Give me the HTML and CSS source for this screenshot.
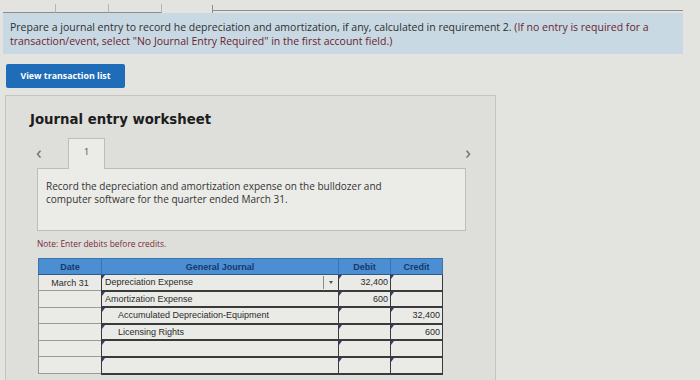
FILE: index.html
```html
<!DOCTYPE html>
<html lang="en">
<head>
    <meta charset="UTF-8">
    <meta name="viewport" content="width=device-width, initial-scale=1.0">
    <title>Journal entry worksheet</title>
    <link rel="stylesheet" href="styles.css">
</head>
<body>
    <div class="req-tabs">
        <span class="req-tab"></span>
        <span class="req-tab short"></span>
        <span class="req-tab"></span>
        <span class="req-tab active"></span>
        <span class="req-tab rest"></span>
    </div>

    <div class="instructions">
        <p>Prepare a journal entry to record he depreciation and amortization, if any, calculated in requirement 2. <span class="hint">(If no entry is required for a transaction/event, select "No Journal Entry Required" in the first account field.)</span></p>
    </div>

    <button class="view-btn">View transaction list</button>

    <div class="worksheet">
        <h2>Journal entry worksheet</h2>

        <div class="pager">
            <span class="arrow">&lsaquo;</span>
            <div class="page-tab">1</div>
            <span class="arrow next">&rsaquo;</span>
        </div>

        <div class="prompt">
            Record the depreciation and amortization expense on the bulldozer and<br>
            computer software for the quarter ended March 31.
        </div>

        <p class="note">Note: Enter debits before credits.</p>

        <table class="journal">
            <thead>
                <tr>
                    <th class="col-date">Date</th>
                    <th class="col-acct">General Journal</th>
                    <th class="col-amt">Debit</th>
                    <th class="col-amt">Credit</th>
                </tr>
            </thead>
            <tbody>
                <tr>
                    <td class="date">March 31</td>
                    <td class="acct mark"><div class="acct-select"><span>Depreciation Expense</span><span class="caret"></span></div></td>
                    <td class="amt mark">32,400</td>
                    <td class="amt mark"></td>
                </tr>
                <tr>
                    <td class="date"></td>
                    <td class="acct mark">Amortization Expense</td>
                    <td class="amt mark">600</td>
                    <td class="amt mark"></td>
                </tr>
                <tr>
                    <td class="date"></td>
                    <td class="acct mark indent">Accumulated Depreciation-Equipment</td>
                    <td class="amt mark"></td>
                    <td class="amt mark">32,400</td>
                </tr>
                <tr>
                    <td class="date"></td>
                    <td class="acct mark indent">Licensing Rights</td>
                    <td class="amt mark"></td>
                    <td class="amt mark">600</td>
                </tr>
                <tr>
                    <td class="date"></td>
                    <td class="acct mark"></td>
                    <td class="amt mark"></td>
                    <td class="amt mark"></td>
                </tr>
                <tr>
                    <td class="date"></td>
                    <td class="acct mark"></td>
                    <td class="amt mark"></td>
                    <td class="amt mark"></td>
                </tr>
            </tbody>
        </table>
    </div>
</body>
</html>
```

FILE: styles.css
```css
body {
    margin: 0;
    width: 700px;
    height: 380px;
    overflow: hidden;
    background-color: #e3e3df;
    font-family: "Open Sans", "DejaVu Sans", sans-serif;
    color: #2b2b2b;
}
.req-tabs {
    display: flex;
    align-items: flex-end;
    height: 13px;
    margin-left: 3px;
    width: 680px;
}
.req-tab {
    height: 8px;
    width: 52px;
    border-right: 1px solid #b5b5b1;
    border-bottom: 1px solid #8d8d8a;
}
.req-tab.active {
    width: 50px;
    border-bottom: none;
    border-right: 1px solid #8d8d8a;
}
.req-tab.rest {
    flex: 1;
    height: 10px;
    border-right: none;
    border-bottom: 1px solid #8d8d8a;
    margin-bottom: 2px;
}
.instructions {
    background-color: #c8d9e3;
    margin-left: 3px;
    width: 666px;
    padding: 7px 7px 6px;
}
.instructions p {
    margin: 0;
    font-size: 10.5px;
    line-height: 14px;
    color: #2f2f2f;
}
.instructions .hint {
    color: #6b2330;
}
.view-btn {
    display: block;
    margin: 10px 0 0 6px;
    width: 119px;
    height: 24px;
    border: none;
    border-radius: 2px;
    background-color: #1f6db9;
    color: white;
    font-family: "Open Sans", "DejaVu Sans", sans-serif;
    font-weight: bold;
    font-size: 8.8px;
    padding: 0;
}
.worksheet {
    margin: 7px 0 0 5px;
    width: 458px;
    height: 300px;
    padding: 0 0 0 31px;
    background-color: #dededb;
    border: 1px solid #c4c4c0;
}
.worksheet h2 {
    margin: 15px 0 0 -7px;
    font-family: "DejaVu Sans", sans-serif;
    font-size: 13.3px;
    font-weight: bold;
    color: #1d1d1d;
    line-height: 18px;
}
.pager {
    display: flex;
    align-items: flex-end;
    height: 31px;
    margin-top: 8px;
    width: 430px;
}
.arrow {
    width: 31px;
    align-self: center;
    font-size: 19px;
    line-height: 17px;
    color: #6e6e6c;
    margin-left: -1px;
}
.arrow.next {
    margin-left: auto;
    width: auto;
    margin-right: -4px;
}
.page-tab {
    width: 35px;
    height: 30px;
    background-color: #ebebe8;
    border: 1px solid #bdbdb9;
    border-bottom: none;
    text-align: center;
    font-size: 9px;
    line-height: 26px;
    color: #444;
    position: relative;
    z-index: 1;
    margin-bottom: -1px;
    margin-left: 1px;
}
.prompt {
    width: 411px;
    height: 44px;
    padding: 11px 8px 6px;
    background-color: #ebebe8;
    border: 1px solid #bdbdb9;
    font-size: 10px;
    line-height: 13px;
    color: #333;
}
.note {
    margin: 8px 0 0 0;
    font-size: 8.4px;
    line-height: 10px;
    color: #7a2b35;
}
.journal {
    margin: 9px 0 0 1px;
    border-collapse: collapse;
    font-family: "Liberation Sans", Arial, sans-serif;
    font-size: 9px;
    color: #2a2a2a;
}
.journal th {
    height: 15px;
    padding: 0;
    background-color: #4b8fd2;
    color: #17386a;
    font-size: 9px;
    font-weight: bold;
    border: 1px solid #3a74b0;
    border-bottom: 1px solid #2d5a8a;
}
.col-date {
    width: 62px;
}
.col-acct {
    width: 236px;
}
.col-amt {
    width: 51px;
}
.journal td {
    height: 14.6px;
    padding: 0;
    background-color: #eaeae7;
    border-left: 1px solid #3a3a3a;
    border-right: 1px solid #3a3a3a;
    border-bottom: 2px solid #3a3a3a;
}
.journal td.date {
    text-align: center;
    border-left: 1px solid #9a9a97;
    border-bottom: 1px solid #9a9a97;
    border-right: 1px solid #3a3a3a;
}
.journal td.acct {
    padding-left: 3px;
}
.journal td.indent {
    padding-left: 16px;
}
.journal td.amt {
    text-align: right;
    padding-right: 2px;
}
.journal td.mark {
    position: relative;
}
.journal td.mark::before {
    content: "";
    position: absolute;
    left: 0;
    top: 0;
    border-top: 4px solid #27447a;
    border-right: 3px solid transparent;
}
.acct-select {
    display: flex;
    align-items: center;
    justify-content: space-between;
}
.caret {
    width: 14px;
    height: 13px;
    border-left: 1px solid #8a8a87;
    position: relative;
}
.caret::after {
    content: "";
    position: absolute;
    left: 5px;
    top: 5px;
    border-top: 3px solid #555;
    border-left: 2.5px solid transparent;
    border-right: 2.5px solid transparent;
}
```
